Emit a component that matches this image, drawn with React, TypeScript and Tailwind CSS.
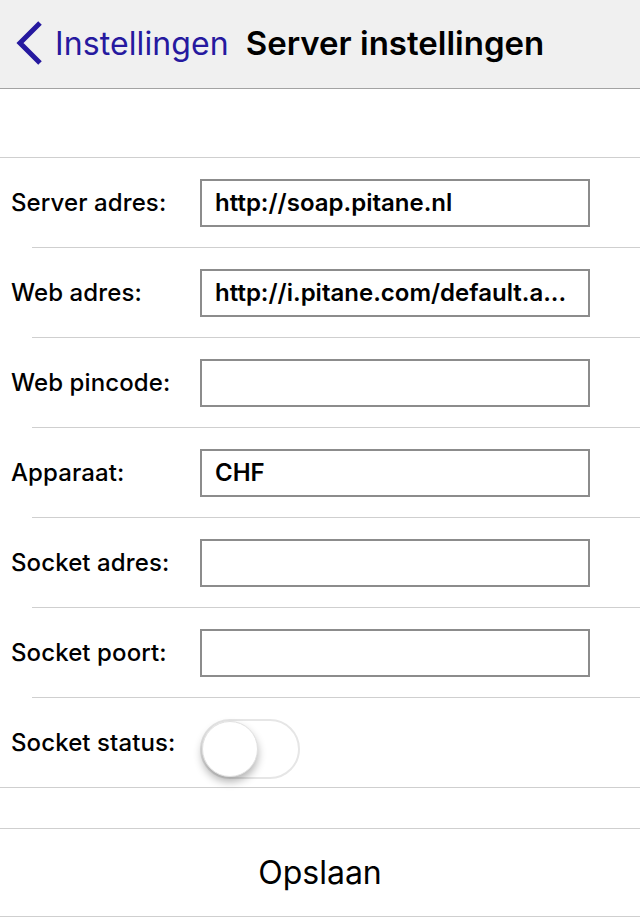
import { useState } from 'react';

const fields = [
  { label: 'Server adres:', value: 'http://soap.pitane.nl' },
  { label: 'Web adres:', value: 'http://i.pitane.com/default.a...' },
  { label: 'Web pincode:', value: '' },
  { label: 'Apparaat:', value: 'CHF' },
  { label: 'Socket adres:', value: '' },
  { label: 'Socket poort:', value: '' },
];

export default function App() {
  const [values, setValues] = useState(fields.map((f) => f.value));
  const [socketOn, setSocketOn] = useState(false);

  return (
    <div className="w-[640px] h-[918px] bg-white overflow-hidden font-['Inter',sans-serif] text-black">
      {/* nav bar */}
      <div className="h-[89px] bg-[#f0f0f0] border-b border-[#a3a3a3] flex items-center">
        <svg width="30" height="46" viewBox="0 0 30 46" className="ml-[14px] mt-[-2px] shrink-0">
          <path d="M26 3 L6 23 L26 43" fill="none" stroke="#26199f" strokeWidth="5" />
        </svg>
        <span className="ml-[11px] text-[32px] text-[#26199f] tracking-[0.1px] whitespace-nowrap">Instellingen</span>
        <span className="ml-[17px] text-[33px] font-semibold tracking-[0px] whitespace-nowrap">Server instellingen</span>
      </div>

      <div className="h-[69px] border-b border-[#cfcfcf]" />

      {fields.map((f, i) => (
        <div key={f.label} className="h-[90px] flex flex-col">
          <div className="flex-1 flex items-center">
            <label className="w-[200px] pl-[11px] text-[24px] font-medium tracking-[0.1px] whitespace-nowrap">{f.label}</label>
            <input
              value={values[i]}
              onChange={(e) => {
                const next = [...values];
                next[i] = e.target.value;
                setValues(next);
              }}
              className="w-[390px] h-[48px] border-2 border-[#8c8c8c] px-[13px] text-[24px] font-semibold outline-none bg-white"
            />
          </div>
          <div className="ml-[32px] border-b border-[#cfcfcf]" />
        </div>
      ))}

      {/* socket status */}
      <div className="h-[90px] flex items-center border-b border-[#cfcfcf]">
        <span className="w-[200px] pl-[11px] text-[24px] font-medium tracking-[0.1px] whitespace-nowrap">Socket status:</span>
        <button
          onClick={() => setSocketOn(!socketOn)}
          className={`relative mt-[12px] w-[100px] h-[60px] rounded-full border-2 ${socketOn ? 'bg-[#4cd964] border-[#4cd964]' : 'bg-white border-[#e6e6e6]'}`}
        >
          <span
            className={`absolute top-[0px] ${socketOn ? 'right-[0px]' : 'left-[0px]'} w-[56px] h-[56px] rounded-full bg-white shadow-[0_5px_9px_rgba(0,0,0,0.3)] border border-[#e0e0e0]`}
          />
        </button>
      </div>

      <div className="h-[41px] border-b border-[#cfcfcf]" />

      <button className="w-full h-[88px] flex items-center justify-center border-b border-[#cfcfcf] text-[32px]">
        Opslaan
      </button>
    </div>
  );
}
